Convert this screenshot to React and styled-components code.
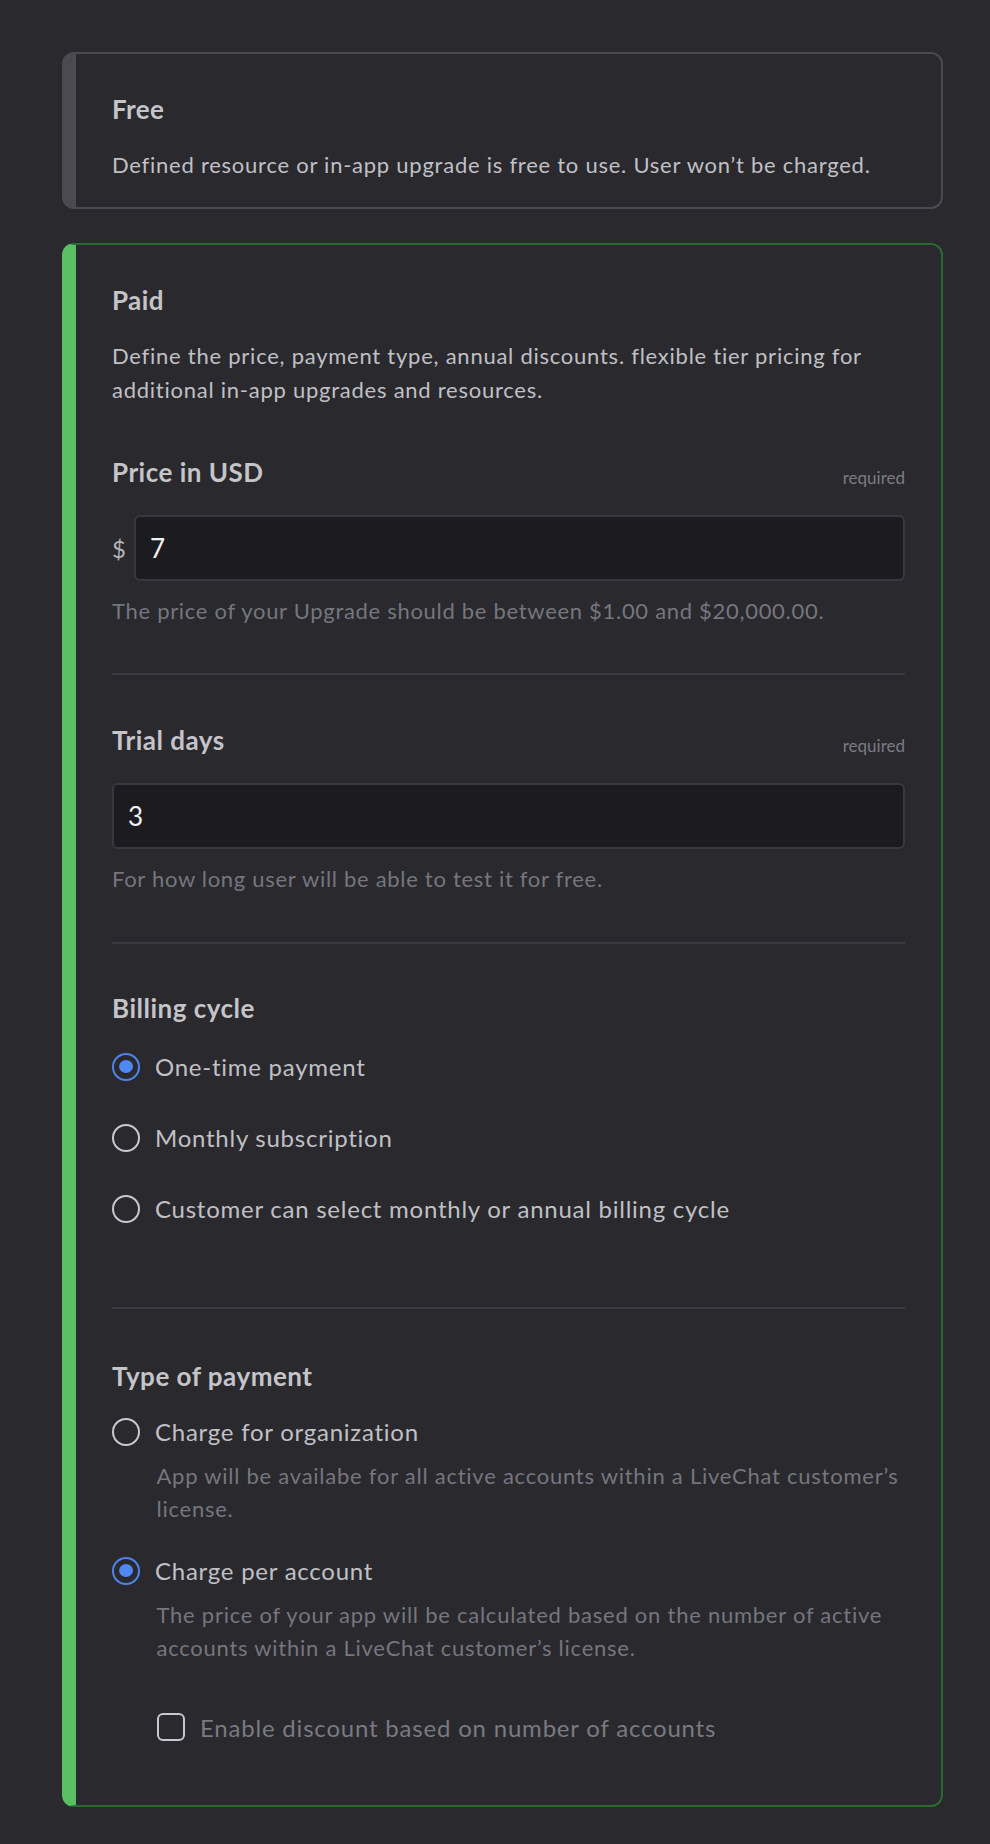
import React from 'react';
import styled, { createGlobalStyle } from 'styled-components';

const GlobalStyle = createGlobalStyle`
  html, body {
    margin: 0;
    padding: 0;
    background: #29292e;
  }
  body {
    font-family: Lato, "Open Sans", sans-serif;
    -webkit-font-smoothing: antialiased;
  }
`;

const Page = styled.div`
  display: flex;
  flex-direction: column;
  gap: 34px;
  padding: 52px 47px 37px 62px;
  background: #29292e;
`;

const Card = styled.section`
  border: 2px solid ${({ $active }) => ($active ? '#2a6a32' : '#4a4a52')};
  border-left: 14px solid ${({ $active }) => ($active ? '#58bf62' : '#4a4a52')};
  border-radius: 12px;
  padding: 39px 36px ${({ $pb }) => $pb}px 36px;
`;

const Title = styled.h2`
  margin: 0;
  font-size: 26px;
  line-height: 32px;
  font-weight: 700;
  letter-spacing: 0.4px;
  color: #c4c4c9;
`;

const Desc = styled.p`
  margin: 22.5px 0 0;
  font-size: 22px;
  line-height: 34px;
  letter-spacing: 0.75px;
  color: #c0c0c5;
`;

const Section = styled.div`
  padding-top: ${({ $pt }) => $pt}px;
  padding-bottom: ${({ $pb }) => $pb || 0}px;
  border-bottom: ${({ $divider }) => ($divider ? '2px solid #3a3a40' : 'none')};
`;

const FieldHeader = styled.div`
  display: flex;
  justify-content: space-between;
  align-items: flex-end;
`;

const Label = styled.h3`
  margin: 0;
  font-size: 26px;
  line-height: 32px;
  font-weight: 700;
  letter-spacing: 0.5px;
  color: #c4c4c9;
`;

const Required = styled.span`
  font-size: 17px;
  line-height: 20px;
  color: #7b7b83;
`;

const InputRow = styled.div`
  display: flex;
  align-items: center;
  gap: 10px;
  margin-top: 27px;
`;

const Currency = styled.span`
  width: 12px;
  font-size: 24px;
  color: #b4b4b9;
`;

const TextInput = styled.input`
  flex: 1;
  min-width: 0;
  box-sizing: border-box;
  height: 66px;
  padding: 0 14px;
  border: 2px solid #38383e;
  border-radius: 6px;
  background: #1c1c20;
  color: #f2f2f4;
  font-family: Lato, "Open Sans", sans-serif;
  font-size: 26px;
  outline: none;
`;

const Hint = styled.p`
  margin: 15px 0 0;
  font-size: 22px;
  line-height: 30px;
  letter-spacing: 0.7px;
  color: #76767e;
`;

const Options = styled.div`
  display: flex;
  flex-direction: column;
  gap: ${({ $gap }) => $gap}px;
  margin-top: ${({ $mt }) => $mt}px;
`;

const OptionRow = styled.label`
  display: flex;
  align-items: center;
  gap: 15px;
  height: 36px;
  font-size: 24px;
  letter-spacing: 0.75px;
  color: #c0c0c5;
`;

const Radio = styled.span`
  box-sizing: border-box;
  width: 28px;
  height: 28px;
  flex: none;
  border-radius: 50%;
  border: 2px solid ${({ $checked }) => ($checked ? '#4c85ee' : '#c6cad0')};
  display: flex;
  align-items: center;
  justify-content: center;
  &::after {
    content: '';
    width: 14px;
    height: 13px;
    border-radius: 50%;
    background: #4f87f5;
    display: ${({ $checked }) => ($checked ? 'block' : 'none')};
  }
`;

const OptionDesc = styled.p`
  margin: 9px 0 0;
  padding-left: 44.5px;
  font-size: 22px;
  line-height: 33px;
  letter-spacing: 0.75px;
  color: #76767e;
`;

const PaymentOption = styled.div`
  & + & {
    margin-top: 28px;
  }
`;

const CheckRow = styled.label`
  display: flex;
  align-items: center;
  gap: 15.5px;
  margin: 49px 0 0 44.5px;
  font-size: 24px;
  letter-spacing: 0.8px;
  color: #7a7a82;
`;

const Checkbox = styled.span`
  box-sizing: border-box;
  width: 28px;
  height: 28px;
  flex: none;
  border: 2px solid #c4c8d0;
  border-radius: 6px;
`;

const billing = [
  { label: 'One-time payment', checked: true },
  { label: 'Monthly subscription' },
  { label: 'Customer can select monthly or annual billing cycle' },
];

const payments = [
  {
    label: 'Charge for organization',
    desc: 'App will be availabe for all active accounts within a LiveChat customer’s license.',
  },
  {
    label: 'Charge per account',
    desc: 'The price of your app will be calculated based on the number of active accounts within a LiveChat customer’s license.',
    checked: true,
  },
];

const App = () => {
  return (
    <>
      <GlobalStyle />
      <Page>
        <Card $pb={25.5}>
          <Title>Free</Title>
          <Desc>Defined resource or in-app upgrade is free to use. User won’t be charged.</Desc>
        </Card>

        <Card $active $pb={63}>
          <Title>Paid</Title>
          <Desc>
            Define the price, payment type, annual discounts. flexible tier pricing for additional
            in-app upgrades and resources.
          </Desc>

          <Section $pt={49.5} $pb={47} $divider>
            <FieldHeader>
              <Label>Price in USD</Label>
              <Required>required</Required>
            </FieldHeader>
            <InputRow>
              <Currency>$</Currency>
              <TextInput defaultValue="7" />
            </InputRow>
            <Hint>The price of your Upgrade should be between $1.00 and $20,000.00.</Hint>
          </Section>

          <Section $pt={49} $pb={47.5} $divider>
            <FieldHeader>
              <Label>Trial days</Label>
              <Required>required</Required>
            </FieldHeader>
            <InputRow>
              <TextInput defaultValue="3" />
            </InputRow>
            <Hint>For how long user will be able to test it for free.</Hint>
          </Section>

          <Section $pt={48} $pb={80} $divider>
            <Label>Billing cycle</Label>
            <Options $gap={35} $mt={25}>
              {billing.map((o) => (
                <OptionRow key={o.label}>
                  <Radio $checked={o.checked} />
                  {o.label}
                </OptionRow>
              ))}
            </Options>
          </Section>

          <Section $pt={51}>
            <Label>Type of payment</Label>
            <Options $gap={0} $mt={22}>
              {payments.map((o) => (
                <PaymentOption key={o.label}>
                  <OptionRow>
                    <Radio $checked={o.checked} />
                    {o.label}
                  </OptionRow>
                  <OptionDesc>{o.desc}</OptionDesc>
                </PaymentOption>
              ))}
            </Options>
            <CheckRow>
              <Checkbox />
              Enable discount based on number of accounts
            </CheckRow>
          </Section>
        </Card>
      </Page>
    </>
  );
};

export default App;
